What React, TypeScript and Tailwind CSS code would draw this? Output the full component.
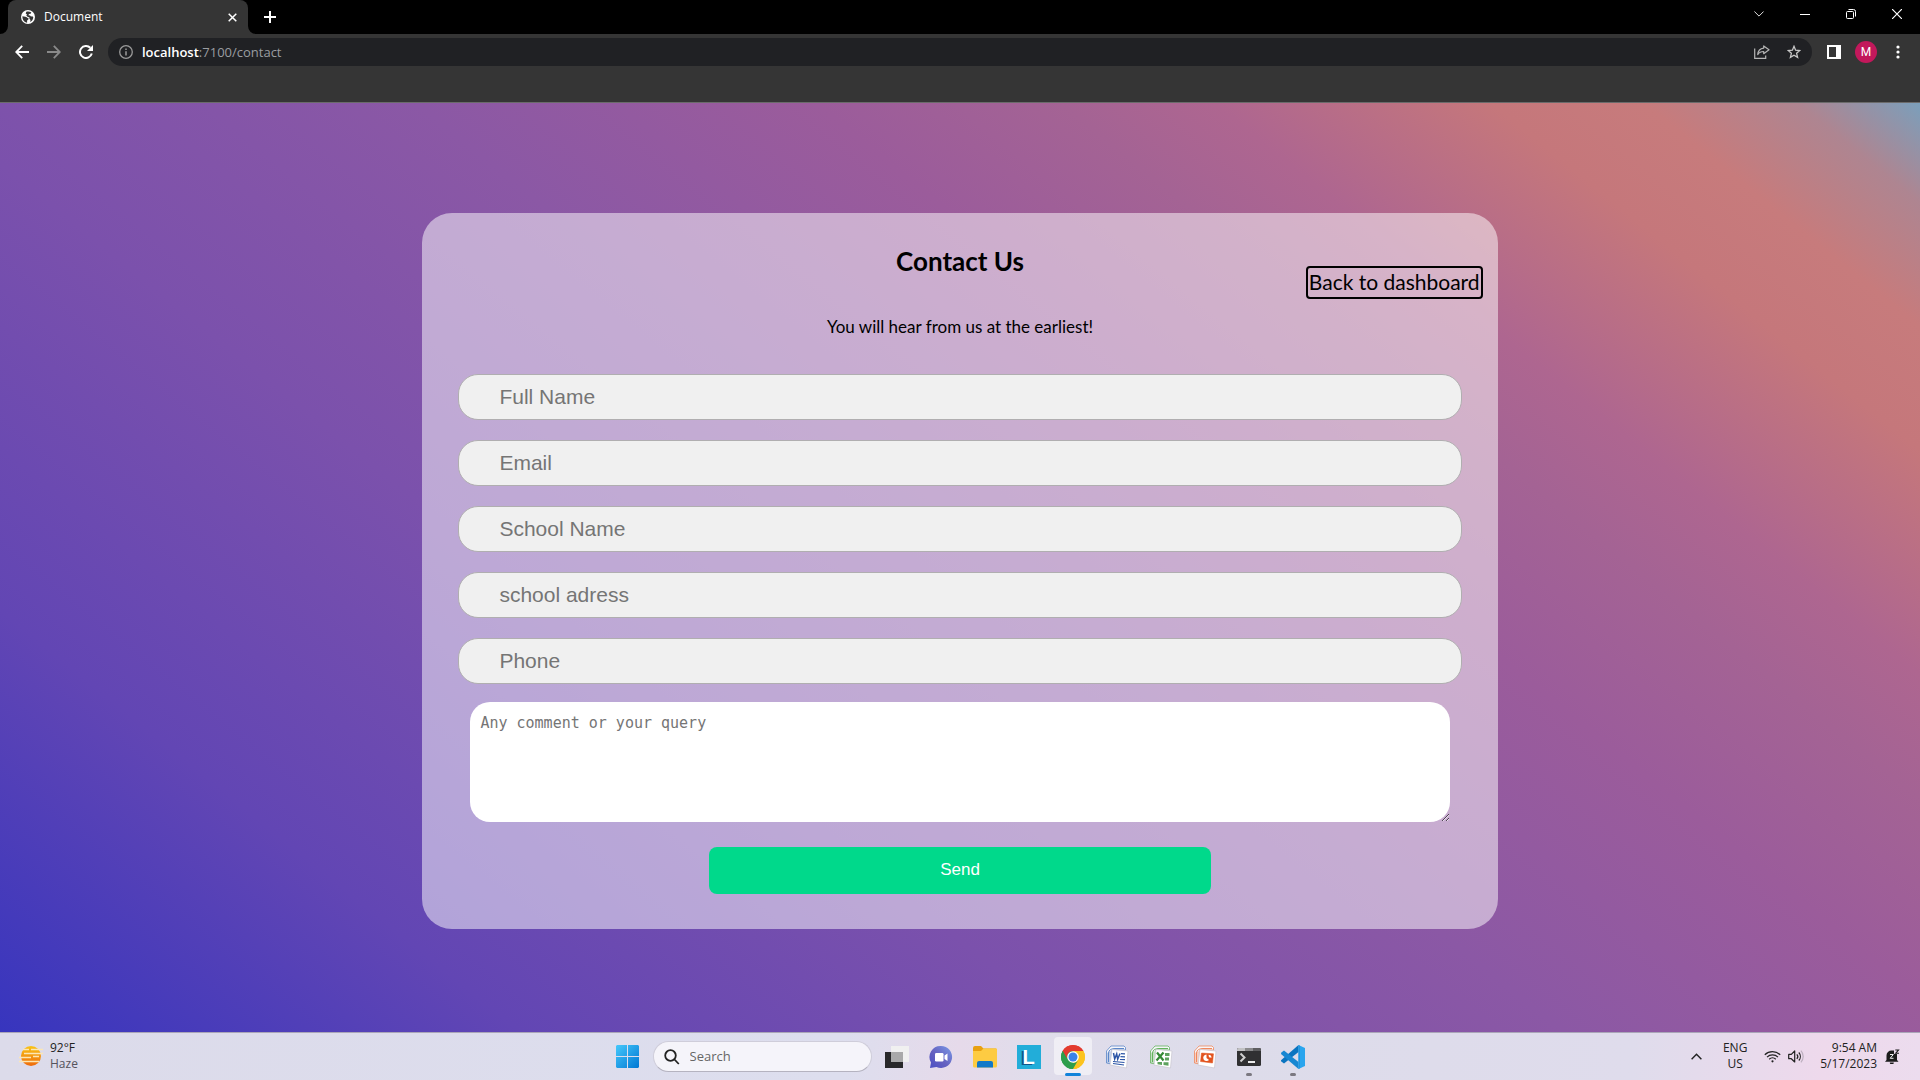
import React from "react";

const pageGradient =
  "bg-[linear-gradient(39deg,#3735be_0%,#6246b4_17%,#7b51ac_35%,#8b58a5_51%,#9b5c9b_64%,#a46394_72%,#ae6690_77%,#c5777b_86%,#c77b7c_91%,#ae8591_96%,#7b9fbb_100%)]";

function ChromeTabStrip() {
  return (
    <div className="flex h-[34px] items-end bg-black text-white">
      <svg className="size-2 shrink-0" viewBox="0 0 8 8" aria-hidden="true">
        <path d="M8 0v8H0a8 8 0 0 0 8-8z" fill="#353535" />
      </svg>
      <div className="flex h-full w-[240px] items-center rounded-t-lg bg-[#353535] pr-2 pl-[13px]">
        <svg className="size-[14px] shrink-0" viewBox="0 0 14 14" aria-hidden="true">
          <circle cx="7" cy="7" r="7" fill="#fff" />
          <path
            d="M1.4 6.2l3 .6c1.1.2 1.5 1 2.600 1.100.6.2.8.8.3 1.500l-1.200 1.200v2.100C3.400 12.300 1.300 9.700 1.400 6.200zM5.300 1.800c1.700-.6 3.600-.4 5 .7l-.7 1.200-1.600.3-.6 1.300 1.600.1 1 1 1.300-.1 1 .9c-.1 2.300-1.400 4-3.200 4.800l.4-2.100-1.100-1.200.1-1.100-2-.8-1.200-1.300.7-1.100-1.300-.8z"
            fill="#353535"
          />
        </svg>
        <span className="ml-[9px] flex-1 font-['Open_Sans',sans-serif] text-[12px] leading-4">Document</span>
        <button aria-label="Close tab" className="flex size-4 items-center justify-center">
          <svg className="size-[9px]" viewBox="0 0 9 9" stroke="#fff" strokeWidth="1.500" aria-hidden="true">
            <path d="M.7.7l7.600 7.600M8.300.7L.7 8.300" />
          </svg>
        </button>
      </div>
      <svg className="size-2 shrink-0" viewBox="0 0 8 8" aria-hidden="true">
        <path d="M0 0v8h8a8 8 0 0 1-8-8z" fill="#353535" />
      </svg>
      <button aria-label="New tab" className="flex h-full w-7 items-center justify-center">
        <svg className="size-3" viewBox="0 0 12 12" stroke="#fff" strokeWidth="2" aria-hidden="true">
          <path d="M6 0v12M0 6h12" />
        </svg>
      </button>
      <div className="ml-auto flex h-7 self-start">
        <button aria-label="Search tabs" className="flex w-[46px] items-center justify-center">
          <svg className="h-[6px] w-[10px]" viewBox="0 0 10 6" fill="none" stroke="#ddd" aria-hidden="true">
            <path d="M.4.5L5 5.100 9.600.5" />
          </svg>
        </button>
        <button aria-label="Minimize" className="flex w-[46px] items-center justify-center">
          <span className="h-px w-[10px] bg-white" />
        </button>
        <button aria-label="Restore" className="flex w-[46px] items-center justify-center">
          <svg className="size-[10px]" viewBox="0 0 10 10" fill="none" stroke="#fff" aria-hidden="true">
            <rect x=".5" y="2.500" width="7" height="7" rx="1" />
            <path d="M2.500.5h5a2 2 0 0 1 2 2v5" />
          </svg>
        </button>
        <button aria-label="Close window" className="flex w-[46px] items-center justify-center">
          <svg className="size-[10px]" viewBox="0 0 10 10" stroke="#fff" strokeWidth="1.200" aria-hidden="true">
            <path d="M0 0l10 10M10 0L0 10" />
          </svg>
        </button>
      </div>
    </div>
  );
}

function ToolButton({ label, children }: { label: string; children: React.ReactNode }) {
  return (
    <button aria-label={label} className="flex h-7 w-8 shrink-0 items-center justify-center">
      {children}
    </button>
  );
}

function ChromeToolbar() {
  return (
    <div className="h-[69px] border-b border-[#6b6b6b] bg-[#353535] pt-1">
      <div className="flex h-7 items-center pr-[6px] pl-[6px]">
        <ToolButton label="Back">
          <svg className="size-[14px]" viewBox="0 0 14 14" fill="none" stroke="#fff" strokeWidth="1.800" aria-hidden="true">
            <path d="M14 7H1.500M7.200.8L1.200 7l6 6.200" />
          </svg>
        </ToolButton>
        <ToolButton label="Forward">
          <svg className="size-[14px]" viewBox="0 0 14 14" fill="none" stroke="#8a8a8a" strokeWidth="1.800" aria-hidden="true">
            <path d="M0 7h12.500M6.800.8l6 6.200-6 6.200" />
          </svg>
        </ToolButton>
        <ToolButton label="Reload">
          <svg className="size-[14px]" viewBox="0 0 14 14" fill="none" aria-hidden="true">
            <path d="M12.800 8.600A6 6 0 1 1 11.300 2.800" stroke="#fff" strokeWidth="2" />
            <path d="M14 0v6H8z" fill="#fff" />
          </svg>
        </ToolButton>
        <div className="ml-[6px] flex h-7 flex-1 items-center rounded-full bg-[#202124] pr-[2px] pl-[11px]">
          <svg className="size-[14px]" viewBox="0 0 14 14" aria-hidden="true">
            <circle cx="7" cy="7" r="6.300" fill="none" stroke="#9a9a9a" strokeWidth="1.300" />
            <path d="M7 6.200v4.300M7 3.400v1.500" stroke="#9a9a9a" strokeWidth="1.500" />
          </svg>
          <span className="ml-[9px] flex-1 font-['Open_Sans',sans-serif] text-[13px] leading-5 text-[#9a9da1]">
            <span className="font-semibold text-white">localhost</span>:7100/contact
          </span>
          <ToolButton label="Share">
            <svg className="h-[14px] w-4" viewBox="0 0 16 14" fill="none" stroke="#b5b5b5" strokeWidth="1.200" aria-hidden="true">
              <path d="M.7 3.500v9.800h11V10.500" />
              <path d="M9.700.9l5.300 3.900-5.300 3.900V6.500C7 6.500 5 7.500 3.700 9.600 4 6.200 6 3.500 9.700 3.100z" strokeLinejoin="round" />
            </svg>
          </ToolButton>
          <ToolButton label="Bookmark this tab">
            <svg className="size-[14px]" viewBox="0 0 14 14" fill="none" stroke="#c8c8c8" strokeWidth="1.300" aria-hidden="true">
              <path d="M7 1.300l1.600 3.900 4.200.3-3.200 2.800 1 4.100L7 10.200l-3.600 2.200 1-4.100L1.200 5.500l4.200-.3z" />
            </svg>
          </ToolButton>
        </div>
        <div className="ml-[6px] flex">
          <ToolButton label="Side panel">
            <svg className="size-[14px]" viewBox="0 0 14 14" aria-hidden="true">
              <path d="M0 0h14v14H0zM2 2v10h7V2z" fill="#fff" fillRule="evenodd" />
            </svg>
          </ToolButton>
          <ToolButton label="Profile">
            <span className="flex size-[22px] items-center justify-center rounded-full bg-[#c2185b] font-['Roboto',sans-serif] text-[12px] font-normal text-white">
              M
            </span>
          </ToolButton>
          <ToolButton label="Menu">
            <svg className="h-[14px] w-1" viewBox="0 0 4 14" fill="#fff" aria-hidden="true">
              <circle cx="2" cy="2" r="1.600" />
              <circle cx="2" cy="7" r="1.600" />
              <circle cx="2" cy="12" r="1.600" />
            </svg>
          </ToolButton>
        </div>
      </div>
    </div>
  );
}

const fields = [
  { id: "name", label: "Full Name", type: "text" },
  { id: "email", label: "Email", type: "email" },
  { id: "school", label: "School Name", type: "text" },
  { id: "address", label: "school adress", type: "text" },
  { id: "phone", label: "Phone", type: "tel" },
];

function ContactCard() {
  return (
    <section className="w-[56%] rounded-[30px] bg-white/50 pb-[35px] font-['Lato',sans-serif] text-black">
      <header className="grid grid-cols-[1fr_auto_1fr] px-[15px] pt-8">
        <h1 className="col-start-2 text-[26px] leading-8 font-bold">Contact Us</h1>
        <a
          href="#dashboard"
          className="mt-[21px] h-[33px] justify-self-end rounded-[4px] border-2 border-black px-px text-[21px] leading-[28px]"
        >
          Back to dashboard
        </a>
        <p className="col-span-3 mt-4 text-center text-[17px] leading-6">You will hear from us at the earliest!</p>
      </header>
      <form className="flex flex-col px-9 pt-[35px]" onSubmit={(e) => e.preventDefault()}>
        <div className="flex flex-col gap-5">
          {fields.map((f) => (
            <input
              key={f.id}
              id={f.id}
              type={f.type}
              aria-label={f.label}
              placeholder={f.label}
              className="h-[46px] w-full rounded-[20px] border border-[#b0aeb0] bg-[#f0f0f0] px-10 font-['Liberation_Sans',sans-serif] text-[21px] text-black outline-none placeholder:text-[#757575]"
            />
          ))}
        </div>
        <textarea
          aria-label="Any comment or your query"
          placeholder="Any comment or your query"
          className="mx-3 mt-[18px] h-[120px] resize rounded-[20px] bg-white p-[10px] font-['DejaVu_Sans_Mono',monospace] text-[15px] leading-[22px] outline-none placeholder:text-[#757575]"
        />
        <button
          type="submit"
          className="mt-[25px] h-[47px] w-1/2 self-center rounded-lg bg-[#00d98b] pb-[2px] font-['Liberation_Sans',sans-serif] text-[17px] text-white"
        >
          Send
        </button>
      </form>
    </section>
  );
}

function TaskIcon({ label, active, running, children }: { label: string; active?: boolean; running?: boolean; children: React.ReactNode }) {
  return (
    <button aria-label={label} className="relative flex h-[47px] w-11 items-center justify-center">
      {active && <span className="absolute inset-x-[3px] top-1 h-[38px] rounded-[4px] bg-white/50" />}
      <span className="relative">{children}</span>
      {active && <span className="absolute bottom-1 h-[3px] w-4 rounded-full bg-[#1283da]" />}
      {running && <span className="absolute bottom-1 h-[3px] w-[6px] rounded-full bg-[#7b7880]" />}
    </button>
  );
}

function OfficeIcon({ color, dark, children }: { color: string; dark: string; children: React.ReactNode }) {
  return (
    <svg className="size-6" viewBox="0 0 24 24" aria-hidden="true">
      <path d="M6 1h13l1.500 1.500V5H7v14l-5.500-1V6z" fill="#f6f6fa" stroke={color} strokeWidth=".8" />
      <path d="M3.500 17V8Q4 3.500 10 3.500h9" fill="none" stroke={color} strokeWidth="1" />
      <path d="M1.500 8l5-2v13l-5-1z" fill={color} opacity=".35" />
      <path d="M7 4.500l16 1.500-1.500 17L5 20z" fill="#fff" stroke="#c9c5d0" strokeWidth=".7" />
      <g fill={dark} stroke={dark}>{children}</g>
    </svg>
  );
}

function Taskbar() {
  return (
    <footer className="grid h-12 shrink-0 grid-cols-[1fr_auto_1fr] items-center border-t border-[#aaa6b8] bg-[linear-gradient(90deg,#dcdbea_0%,#dddeee_44%,#e6daea_50%,#e0ddeb_54%,#dddcea_64%,#dfdcec_85%,#eed9ec_95%,#ecdcee_100%)] font-['Open_Sans',sans-serif] text-[12px] leading-4 text-[#222]">
      <button className="flex items-center justify-self-start pb-px pl-[19px] text-left">
        <svg className="size-6" viewBox="0 0 24 24" aria-hidden="true">
          <defs>
            <linearGradient id="sun" x1="0" y1="0" x2="0" y2="1">
              <stop offset="0" stopColor="#f9c416" />
              <stop offset="1" stopColor="#ee6a0c" />
            </linearGradient>
          </defs>
          <circle cx="12" cy="12" r="10" fill="url(#sun)" />
          <g stroke="#fce6b4" strokeWidth="1.700">
            <path d="M4 5.500h6M12 5.500h12M5 9.500h19M0 13.500h12M14 12.500h6M0 17.500h20" />
          </g>
        </svg>
        <span className="ml-[7px] flex flex-col">
          <span>92°F</span>
          <span className="text-[#55535c]">Haze</span>
        </span>
      </button>

      <nav className="flex items-center" aria-label="Taskbar">
        <TaskIcon label="Start">
          <svg className="size-[23px]" viewBox="0 0 23 23" aria-hidden="true">
            <defs>
              <linearGradient id="win" x1="0" y1="0" x2="1" y2="1">
                <stop offset="0" stopColor="#45c8fb" />
                <stop offset="1" stopColor="#0077d3" />
              </linearGradient>
            </defs>
            <path d="M1 0h10v11H0V1zM12 0h10l1 1v10H12zM0 12h11v11H1l-1-1zM12 12h11v10l-1 1H12z" fill="url(#win)" />
          </svg>
        </TaskIcon>
        <label className="mx-[3px] flex h-[31px] w-[219px] items-center rounded-full border border-[#cfcdda] border-b-[#b5b3c0] bg-[#f5f4fa] pl-[10px]">
          <svg className="size-4" viewBox="0 0 16 16" fill="none" stroke="#222" strokeWidth="1.800" aria-hidden="true">
            <circle cx="6.500" cy="6.500" r="5.300" />
            <path d="M10.500 10.500l4.300 4.500" />
          </svg>
          <input aria-label="Search" placeholder="Search" className="ml-[10px] w-[160px] bg-transparent pb-[2px] text-[13px] outline-none placeholder:text-[#666]" />
        </label>
        <TaskIcon label="Task view">
          <svg className="size-6" viewBox="0 0 24 24" aria-hidden="true">
            <path d="M0 7h18v16H0z" fill="#28282a" />
            <path d="M6 1h18v16H6z" fill="#f0f0f0" />
            <path d="M6 7h12v10H6z" fill="#a9a9aa" />
          </svg>
        </TaskIcon>
        <TaskIcon label="Chat">
          <svg className="size-6" viewBox="0 0 24 24" aria-hidden="true">
            <defs>
              <linearGradient id="chat" x1="1" y1="0" x2="0" y2="1">
                <stop offset="0" stopColor="#7b9be8" />
                <stop offset=".55" stopColor="#6561c0" />
                <stop offset="1" stopColor="#4b4fc4" />
              </linearGradient>
            </defs>
            <path d="M12 1a11 11 0 1 1-4.500 21L1 23l1-5.500A11 11 0 0 1 12 1z" fill="url(#chat)" />
            <rect x="6" y="8" width="8.500" height="8.500" rx="1.200" fill="#fff" />
            <path d="M15.500 10.500l3-2v7.500l-3-2z" fill="#fff" />
          </svg>
        </TaskIcon>
        <TaskIcon label="File Explorer">
          <svg className="size-6" viewBox="0 0 24 24" aria-hidden="true">
            <path d="M0 3q0-2 2-2h6l2.500 2.500H23l1 1v6H0z" fill="#e8a010" />
            <path d="M0 6h8l2.500-2.500H23q1 0 1 1V21q0 1.500-1.500 1.500h-21Q0 22.500 0 21z" fill="#fdcb42" />
            <path d="M4 22.500V18q0-2 2-2h12q2 0 2 2v4.500z" fill="#1179c8" />
          </svg>
        </TaskIcon>
        <TaskIcon label="Lenovo Vantage">
          <span className="flex size-6 items-center justify-center bg-[#22add9] font-['Liberation_Sans',sans-serif] text-[20px] leading-6 font-bold text-white [text-shadow:-2px_1px_0_#14568a]">
            L
          </span>
        </TaskIcon>
        <TaskIcon label="Google Chrome" active>
          <svg className="size-6" viewBox="0 0 24 24" aria-hidden="true">
            <path d="M12 12L1.610 6A12 12 0 0 1 22.390 6z" fill="#e33b2e" />
            <path d="M12 12L22.390 6A12 12 0 0 1 12 24z" fill="#fcc31e" />
            <path d="M12 12L12 24A12 12 0 0 1 1.610 6z" fill="#2d9e4b" />
            <path d="M12 6h10.390A12 12 0 0 1 12 24l5.200-9z" fill="#fcc31e" />
            <path d="M1.610 6L6.800 15 12 12V6z" fill="#2d9e4b" />
            <path d="M1.610 6A12 12 0 0 1 22.390 6H12a6 6 0 0 0-5.200 9z" fill="#e33b2e" />
            <path d="M1.610 6A12 12 0 0 0 12 24l5.200-9a6 6 0 0 1-10.400 0z" fill="#2d9e4b" />
            <circle cx="12" cy="12" r="5.800" fill="#fff" />
            <circle cx="12" cy="12" r="4.500" fill="#3b82ea" />
          </svg>
        </TaskIcon>
        <TaskIcon label="Word">
          <OfficeIcon color="#5b86c8" dark="#2c55a6">
            <path d="M8.500 8l1.200 6 2-5 1 5.200L15 8.500" fill="none" strokeWidth="1.500" />
            <path d="M16 8.700l4 .2M15.500 11.700l4.500.2M15 14.500l5 .2M8 16.500l11.500 1M8 18.500l11 1.500" fill="none" strokeWidth="1.200" />
          </OfficeIcon>
        </TaskIcon>
        <TaskIcon label="Excel">
          <OfficeIcon color="#63b35c" dark="#358a36">
            <path d="M8 7.500l6.500 8M14.500 7.500l-7 8" fill="none" strokeWidth="2.200" />
            <path d="M16 8h4.500v3H16zM16 12.500h4v3h-4zM8.500 17h4.500v3l-4.500-.7zM14.500 17.200h5v3.600l-5-.8z" strokeWidth="0" opacity=".8" />
          </OfficeIcon>
        </TaskIcon>
        <TaskIcon label="PowerPoint">
          <OfficeIcon color="#f0885c" dark="#e2541f">
            <path d="M8.500 8l12 .8L19.500 18 7.500 16.500z" strokeWidth=".5" />
            <path d="M13.500 9.500a3.300 3.300 0 1 0 2.500 5.500l-2.500-2zM15.500 9.700a3 3 0 0 1 3 3l-2.500-.5z" fill="#fff" stroke="none" />
          </OfficeIcon>
        </TaskIcon>
        <TaskIcon label="Terminal" running>
          <svg className="size-6" viewBox="0 0 24 24" aria-hidden="true">
            <rect y="3" width="24" height="18" rx="1.500" fill="#303032" />
            <path d="M0 6V4.500Q0 3 1.500 3H8v3z" fill="#c2c2c4" />
            <path d="M8 3h8v3H8z" fill="#8a8a8c" />
            <path d="M16 3h6.500Q24 3 24 4.500V6h-8z" fill="#5e5e60" />
            <path d="M3.500 8.500l4 4-4 4" fill="none" stroke="#d0d0d0" strokeWidth="2" />
            <path d="M11 17h7" stroke="#fff" strokeWidth="1.800" />
          </svg>
        </TaskIcon>
        <TaskIcon label="Visual Studio Code" running>
          <svg className="size-6" viewBox="0 0 24 24" aria-hidden="true">
            <path d="M17.500 0L24 3v18l-6.500 3z" fill="#2aa5ee" />
            <path d="M17.500 0v7L3 18.500l-3-2.300v-1z" fill="#0a74c0" />
            <path d="M17.500 24v-7L3 5.500.3 7.500 0 9z" fill="#1787d2" />
            <path d="M17.500 0v24l1.500-.7V.7z" fill="#1e96e0" />
          </svg>
        </TaskIcon>
      </nav>

      <div className="flex items-center justify-self-end pr-[20px] pb-px">
        <button aria-label="Show hidden icons">
          <svg className="h-[7px] w-[11px]" viewBox="0 0 11 7" fill="none" stroke="#222" strokeWidth="1.400" aria-hidden="true">
            <path d="M.6 6.300l4.900-5 4.900 5" />
          </svg>
        </button>
        <button className="ml-5 w-[26px] text-center">
          ENG
          <br />
          US
        </button>
        <button aria-label="Network and sound" className="ml-4 flex items-center gap-[7px]">
          <svg className="h-[13px] w-[17px]" viewBox="0 0 17 13" fill="none" stroke="#222" strokeWidth="1.200" aria-hidden="true">
            <path d="M.8 4.800a11 11 0 0 1 15.400 0M3 7.100a7.800 7.800 0 0 1 11 0M5.200 9.300a4.700 4.700 0 0 1 6.600 0" />
            <circle cx="8.500" cy="11.300" r="1.100" fill="#222" stroke="none" />
          </svg>
          <svg className="h-[13px] w-4" viewBox="0 0 16 13" fill="none" stroke="#222" strokeWidth="1.200" strokeLinejoin="round" aria-hidden="true">
            <path d="M.7 4.400h2.600L6.700 1v11L3.300 8.700H.7zM8.800 4.300a3.300 3.300 0 0 1 0 4.500M10.800 2.500a6 6 0 0 1 0 8" />
            <path d="M12.900.7a8.500 8.500 0 0 1 0 11.600" stroke="#bdb0bf" />
          </svg>
        </button>
        <button className="ml-4 text-right">
          9:54 AM
          <br />
          5/17/2023
        </button>
        <button aria-label="Notifications" className="ml-[8px]">
          <svg className="size-[15px]" viewBox="0 0 15 15" aria-hidden="true">
            <path d="M1.500 11V6.500A5 5 0 0 1 6.500 1.500H9V5h3v6l1.500 1.700H0zM4.800 13.400h4A2 2 0 0 1 4.800 13.400z" fill="#1b1b1b" />
            <path d="M10.300 1h3.200L10.700 4.300h3.300" fill="none" stroke="#1b1b1b" strokeWidth="1.100" />
            <path d="M5 5.500h3.300L5.200 9.300h3.300" fill="none" stroke="#eee" strokeWidth="1" />
          </svg>
        </button>
      </div>
    </footer>
  );
}

export default function App() {
  return (
    <div className="flex min-h-screen flex-col">
      <ChromeTabStrip />
      <ChromeToolbar />
      <main className={`flex flex-1 items-start justify-center pt-[110px] pb-[103px] ${pageGradient}`}>
        <ContactCard />
      </main>
      <Taskbar />
    </div>
  );
}
